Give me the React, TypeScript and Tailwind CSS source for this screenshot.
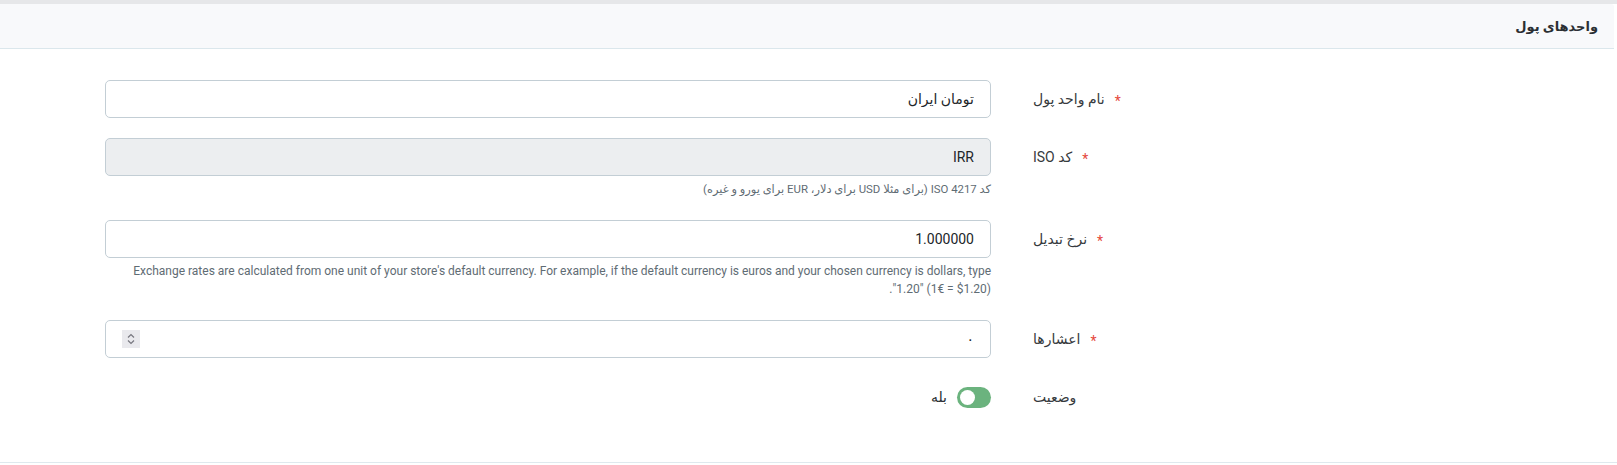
import React from 'react';

const fontStack = "font-['Roboto','DejaVu_Sans',sans-serif]";

const Label: React.FC<{ text: string; required?: boolean }> = ({ text, required }) => (
    <div className="w-[200px] h-[38px] flex items-center justify-end gap-[10px] shrink-0">
        {required && <span className="text-[#e5483c] text-[14px] leading-none pt-[3px]">*</span>}
        <span className="text-[14px] text-[#363a3d]">{text}</span>
    </div>
);

const Help: React.FC<{ children: React.ReactNode; small?: boolean }> = ({ children, small }) => (
    <div className={`mt-1 mb-[2px] leading-[18px] text-[#5f6c74] ${small ? 'text-[11.4px]' : 'text-[12px]'}`}>{children}</div>
);

export default function App() {
    return (
        <div dir="rtl" className={`min-h-[465px] bg-white ${fontStack}`}>
            <div className="h-1 bg-[#e6e7e9]" />
            <div className="mr-[3px] h-[45px] bg-[#f8f9fb] border-b border-[#dbe7ec] rounded-tr-[3px] flex items-center px-4">
                <h3 className="text-[13px] font-bold text-[#2b2f33] pt-[1px]">واحدهای پول</h3>
            </div>

            {/* Form */}
            <div className="pt-[31px] pb-[46px] pr-[384px] border-b border-[#dfe9ee] flex flex-col">
                {/* Name */}
                <div className="flex items-start gap-[42px] mb-[20px]">
                    <Label text="نام واحد پول" required />
                    <div className="w-[886px]">
                        <input
                            readOnly
                            value="تومان ایران"
                            className="w-full h-[38px] px-4 text-[14px] text-[#212529] bg-white border border-[#c3ced5] rounded-[5px] outline-none"
                        />
                    </div>
                </div>

                {/* ISO code */}
                <div className="flex items-start gap-[42px] mb-[20px]">
                    <Label text="کد ISO" required />
                    <div className="w-[886px]">
                        <input
                            readOnly
                            value="IRR"
                            className="w-full h-[38px] px-4 text-[14px] text-[#212529] bg-[#eceef0] border border-[#c3ced5] rounded-[5px] outline-none"
                        />
                        <Help small>کد ISO 4217 (برای مثلا USD برای دلار، EUR برای یورو و غیره)</Help>
                    </div>
                </div>

                {/* Exchange rate */}
                <div className="flex items-start gap-[42px] mb-[20px]">
                    <Label text="نرخ تبدیل" required />
                    <div className="w-[886px]">
                        <input
                            readOnly
                            value="1.000000"
                            className="w-full h-[38px] px-4 text-[14px] text-[#212529] bg-white border border-[#c3ced5] rounded-[5px] outline-none"
                        />
                        <Help>
                            Exchange rates are calculated from one unit of your store's default currency. For example, if the default currency is euros and your chosen currency is dollars, type "1.20" (1€ = $1.20).
                        </Help>
                    </div>
                </div>

                {/* Decimal places */}
                <div className="flex items-start gap-[42px] mb-[20px]">
                    <Label text="اعشارها" required />
                    <div className="w-[886px] h-[38px] px-4 bg-white border border-[#c3ced5] rounded-[5px] flex items-center justify-between">
                        <span className="text-[14px] text-[#212529]">۰</span>
                        <span className="w-[18px] h-[18px] bg-[#e9e9ed] flex items-center justify-center">
                            <svg width="10" height="14" viewBox="0 0 10 14" fill="none" stroke="#77777f" strokeWidth="1.2">
                                <path d="M2 5.5 L5 2.5 L8 5.5" />
                                <path d="M2 8.5 L5 11.5 L8 8.5" />
                            </svg>
                        </span>
                    </div>
                </div>

                {/* Status */}
                <div className="flex items-start gap-[42px]">
                    <Label text="وضعیت" />
                    <div className="w-[886px] h-[38px] flex items-center gap-[10px]">
                        <span className="w-[34px] h-[21px] rounded-full bg-[#6bb37e] flex items-center justify-end px-[3px]">
                            <span className="w-[15px] h-[15px] rounded-full bg-white" />
                        </span>
                        <span className="text-[14px] text-[#2b2f33]">بله</span>
                    </div>
                </div>
            </div>
        </div>
    );
}
